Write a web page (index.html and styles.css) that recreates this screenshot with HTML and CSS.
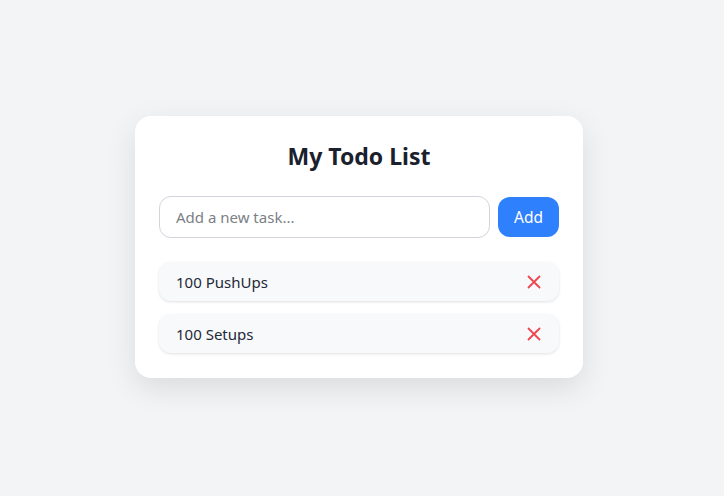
FILE: index.html
```html
<!DOCTYPE html>
<html>
<head>
<meta charset="utf-8">
<link rel="stylesheet" href="styles.css">
</head>
<body>
<main class="page">
  <section class="card">
    <h1 class="title">My Todo List</h1>
    <form class="add-row" onsubmit="return false">
      <input class="task-input" type="text" placeholder="Add a new task...">
      <button class="add-btn" type="button">Add</button>
    </form>
    <ul class="list">
      <li class="item">
        <span class="item-text">100 PushUps</span>
        <button class="del-btn" type="button" aria-label="Delete">
          <svg width="16" height="16" viewBox="0 0 16 16"><path d="M2.5 2.5L13.5 13.5M13.5 2.5L2.5 13.5" stroke="currentColor" stroke-width="1.8" stroke-linecap="round"/></svg>
        </button>
      </li>
      <li class="item">
        <span class="item-text">100 Setups</span>
        <button class="del-btn" type="button" aria-label="Delete">
          <svg width="16" height="16" viewBox="0 0 16 16"><path d="M2.5 2.5L13.5 13.5M13.5 2.5L2.5 13.5" stroke="currentColor" stroke-width="1.8" stroke-linecap="round"/></svg>
        </button>
      </li>
    </ul>
  </section>
</main>
</body>
</html>
```
FILE: styles.css
```css
* { box-sizing: border-box; }
html, body { margin: 0; height: 100%; }
body {
  background: #f3f4f6;
  font-family: "Noto Sans", "Open Sans", sans-serif;
  color: #1f2937;
}
.page {
  min-height: 100%;
  display: flex;
  align-items: center;
  justify-content: center;
}
.card {
  width: 448px;
  background: #ffffff;
  border-radius: 16px;
  padding: 24px 24px 25px;
  box-shadow: 0 10px 30px rgba(0, 0, 0, 0.10);
  margin: 0 6px 2px 0;
}
.title {
  margin: 0 0 24px;
  text-align: center;
  font-size: 23px;
  line-height: 32px;
  font-weight: 700;
  color: #1a202c;
}
.add-row {
  display: flex;
  align-items: center;
  gap: 8px;
  margin: 0 0 24px;
}
.task-input {
  flex: 1;
  height: 42px;
  border: 1px solid #d1d5db;
  border-radius: 12px;
  padding: 0 16px;
  font-family: inherit;
  font-size: 15px;
  color: #1f2937;
  outline: none;
}
.task-input::placeholder { color: #7b7f86; }
.add-btn {
  height: 40px;
  width: 61px;
  border: none;
  border-radius: 12px;
  background: #2f80fd;
  color: #ffffff;
  font-family: inherit;
  font-size: 15.5px;
}
.list {
  list-style: none;
  margin: 0;
  padding: 0;
  display: flex;
  flex-direction: column;
  gap: 13px;
}
.item {
  display: flex;
  align-items: center;
  justify-content: space-between;
  height: 39px;
  padding: 0 17px 0 17px;
  background: #f8f9fb;
  border-radius: 12px;
  box-shadow: 0 1px 3px rgba(0, 0, 0, 0.12);
  font-size: 15px;
  color: #1f2937;
}
.del-btn {
  border: none;
  background: none;
  padding: 0;
  color: #f0454c;
  display: flex;
  align-items: center;
}
```
